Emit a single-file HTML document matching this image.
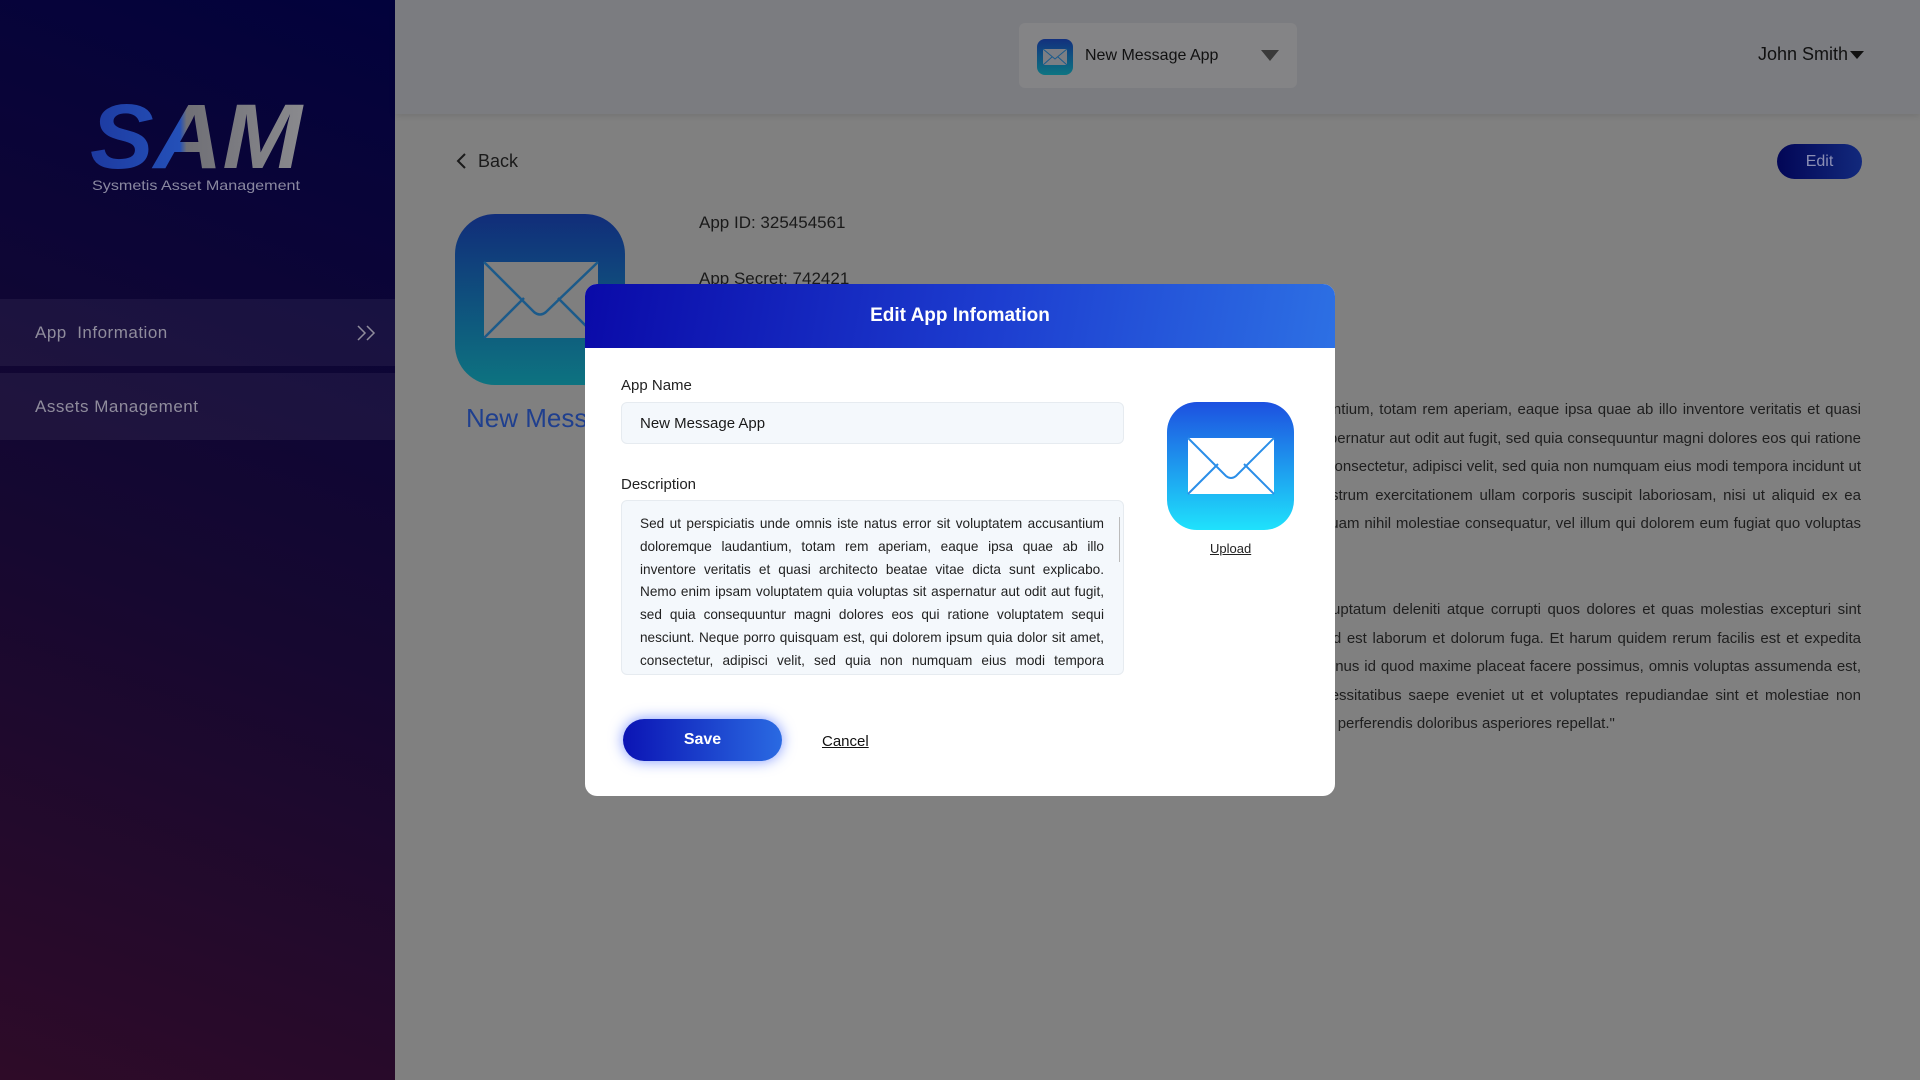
<!DOCTYPE html>
<html><head><meta charset="utf-8"><style>
*{margin:0;padding:0;box-sizing:border-box}
body{width:1920px;height:1080px;overflow:hidden;position:relative;background:#808080;font-family:"Liberation Sans",sans-serif;color:#1a1a1a}
.side{position:absolute;left:0;top:0;width:395px;height:1080px;background:linear-gradient(20deg,#2e0b28 0%,#160830 45%,#02023c 100%)}
.menu{position:absolute;left:0;width:395px;background:rgba(255,255,255,0.055);color:#8f8c9c;font-size:17px;letter-spacing:.5px;padding-left:35px;display:flex;align-items:center}
.top{position:absolute;left:395px;top:0;width:1525px;height:114px;background:#7b7c80;box-shadow:0 2px 6px rgba(0,0,0,0.1)}
.abs{position:absolute}
.para{position:absolute;left:699px;width:1162px;font-size:15px;line-height:28.6px;text-align:justify;color:#1e1e1e}
.modal{position:absolute;left:585px;top:284px;width:750px;height:512px;background:#fff;border-radius:12px;overflow:hidden}
.mh{height:64px;background:linear-gradient(100deg,#0a0aa8 0%,#1d3ed0 55%,#2d70e4 100%);color:#fff;font-size:19px;font-weight:bold;text-align:center;line-height:64px}
.lbl{position:absolute;font-size:15px;color:#222}
.box{position:absolute;left:36px;width:503px;background:#f4f8fc;border:1px solid #e6ebf0;border-radius:6px}
</style></head><body>
<div class="side">
<svg class="abs" style="left:88px;top:88px" width="220" height="110" viewBox="0 0 220 110">
<defs><linearGradient id="lg" x1="0" y1="0" x2="1" y2="0"><stop offset="0" stop-color="#1d3aa0"/><stop offset=".42" stop-color="#2450b8"/><stop offset=".45" stop-color="#707076"/><stop offset="1" stop-color="#8a8a8e"/></linearGradient></defs>
<text x="108" y="80" text-anchor="middle" font-family="Liberation Sans" font-weight="bold" font-style="italic" font-size="92" fill="url(#lg)" textLength="212" lengthAdjust="spacingAndGlyphs">SAM</text>
<text x="4" y="102" font-family="Liberation Sans" font-size="14" fill="#8a88a0" textLength="208" lengthAdjust="spacingAndGlyphs">Sysmetis Asset Management</text>
</svg>
<div class="menu" style="top:299px;height:67px">App&nbsp; Information
<svg class="abs" style="left:356px;top:25px" width="22" height="18" viewBox="0 0 22 18"><path d="M2 2l7 7-7 7M11 2l7 7-7 7" fill="none" stroke="#8f8c9c" stroke-width="1.5"/></svg></div>
<div class="menu" style="top:373px;height:67px">Assets Management</div>
</div>
<div class="top">
<div class="abs" style="left:624px;top:23px;width:278px;height:65px;background:#848486;border-radius:6px">
<div class="abs" style="left:18px;top:16px;width:36px;height:36px;border-radius:8px;background:linear-gradient(#12307e,#0d7582)"><svg width="36" height="36" viewBox="0 0 36 36"><rect x="6" y="10" width="24" height="16" fill="#7c7e84"/><path d="M6 10l12 10 12-10M6 26l9-8M30 26l-9-8" stroke="#1a5a8c" fill="none"/></svg></div>
<div class="abs" style="left:66px;top:24px;font-size:16px;color:#111">New Message App</div>
<svg class="abs" style="left:242px;top:27px" width="18" height="12"><path d="M0 0h18L9 11z" fill="#3a3a3a"/></svg>
</div>
<div class="abs" style="left:1363px;top:44px;font-size:18px;color:#111">John Smith</div>
<svg class="abs" style="left:1455px;top:51px" width="14" height="9"><path d="M0 0h14L7 8z" fill="#111"/></svg>
</div>
<svg class="abs" style="left:455px;top:152px" width="12" height="18"><path d="M10 2L3 9l7 7" fill="none" stroke="#1a1a1a" stroke-width="2"/></svg>
<div class="abs" style="left:478px;top:151px;font-size:18px">Back</div>
<div class="abs" style="left:1777px;top:144px;width:85px;height:35px;border-radius:18px;background:linear-gradient(90deg,#020656,#12297c);color:#8b8fb4;font-size:16px;text-align:center;line-height:35px">Edit</div>
<div class="abs" style="left:455px;top:214px;width:170px;height:171px;border-radius:40px;background:linear-gradient(#112d7a,#0d7380)"><svg width="170" height="171" viewBox="0 0 170 171"><rect x="29" y="48" width="114" height="76" fill="#7f7f7f"/><path d="M29 48l50 50q6 5 12 0l52-50M29 124l40-40M143 124l-40-40" stroke="#1b5a8a" stroke-width="2.5" fill="none"/></svg></div>
<div class="abs" style="left:466px;top:403px;font-size:26px;color:#1f3f8e">New Message App</div>
<div class="abs" style="left:699px;top:213px;font-size:17px">App ID: 325454561</div>
<div class="abs" style="left:699px;top:269px;font-size:17px">App Secret: 742421</div>
<div class="para" style="top:396px">Sed ut perspiciatis unde omnis iste natus error sit voluptatem accusantium doloremque laudantium, totam rem aperiam, eaque ipsa quae ab illo inventore veritatis et quasi architecto beatae vitae dicta sunt explicabo. Nemo enim ipsam voluptatem quia voluptas sit aspernatur aut odit aut fugit, sed quia consequuntur magni dolores eos qui ratione voluptatem sequi nesciunt. Neque porro quisquam est, qui dolorem ipsum quia dolor sit amet, consectetur, adipisci velit, sed quia non numquam eius modi tempora incidunt ut labore et dolore magnam aliquam quaerat voluptatem. Ut enim ad minima veniam, quis nostrum exercitationem ullam corporis suscipit laboriosam, nisi ut aliquid ex ea commodi consequatur? Quis autem vel eum iure reprehenderit qui in ea voluptate velit esse quam nihil molestiae consequatur, vel illum qui dolorem eum fugiat quo voluptas nulla pariatur?</div>
<div class="para" style="top:596px">"At vero eos et accusamus et iusto odio dignissimos ducimus qui blanditiis praesentium voluptatum deleniti atque corrupti quos dolores et quas molestias excepturi sint occaecati cupiditate non provident, similique sunt in culpa qui officia deserunt mollitia animi, id est laborum et dolorum fuga. Et harum quidem rerum facilis est et expedita distinctio. Nam libero tempore, cum soluta nobis est eligendi optio cumque nihil impedit quo minus id quod maxime placeat facere possimus, omnis voluptas assumenda est, omnis dolor repellendus. Temporibus autem quibusdam et aut officiis debitis aut rerum necessitatibus saepe eveniet ut et voluptates repudiandae sint et molestiae non recusandae. Itaque earum rerum hic tenetur a sapiente delectus, maiores alias consequatur aut perferendis doloribus asperiores repellat."</div>
<div class="modal">
<div class="mh">Edit App Infomation</div>
<div class="lbl" style="left:36px;top:93px">App Name</div>
<div class="box" style="top:118px;height:42px;font-size:15px;padding:12px 0 0 18px">New Message App</div>
<div class="lbl" style="left:36px;top:192px">Description</div>
<div class="box" style="top:216px;height:175px;overflow:hidden;padding:12px 19px 0 18px;font-size:13.6px;line-height:22.8px;text-align:justify;color:#222">Sed ut perspiciatis unde omnis iste natus error sit voluptatem accusantium doloremque laudantium, totam rem aperiam, eaque ipsa quae ab illo inventore veritatis et quasi architecto beatae vitae dicta sunt explicabo. Nemo enim ipsam voluptatem quia voluptas sit aspernatur aut odit aut fugit, sed quia consequuntur magni dolores eos qui ratione voluptatem sequi nesciunt. Neque porro quisquam est, qui dolorem ipsum quia dolor sit amet, consectetur, adipisci velit, sed quia non numquam eius modi tempora incidunt ut labore et dolore magnam aliquam.
<div class="abs" style="left:497px;top:16px;width:1px;height:45px;background:#bbb"></div></div>
<div class="abs" style="left:582px;top:118px;width:127px;height:128px;border-radius:30px;background:linear-gradient(#1d50e0,#1fe2fc)"><svg width="127" height="128" viewBox="0 0 127 128"><rect x="21" y="36" width="86" height="56" fill="#fff"/><path d="M21 36l38 38q5 4 10 0l38-38M21 92l30-30M107 92l-30-30" stroke="#2a8ee8" stroke-width="2" fill="none"/></svg></div>
<div class="abs" style="left:625px;top:257px;font-size:13px;text-decoration:underline;color:#222">Upload</div>
<div class="abs" style="left:38px;top:435px;width:159px;height:42px;border-radius:21px;background:linear-gradient(90deg,#0b14b4,#2a6ae2);box-shadow:0 0 14px rgba(40,80,255,.6);color:#fff;font-size:16px;font-weight:bold;text-align:center;line-height:42px">Save</div>
<div class="abs" style="left:237px;top:449px;font-size:15px;text-decoration:underline;color:#111">Cancel</div>
</div>
</body></html>
